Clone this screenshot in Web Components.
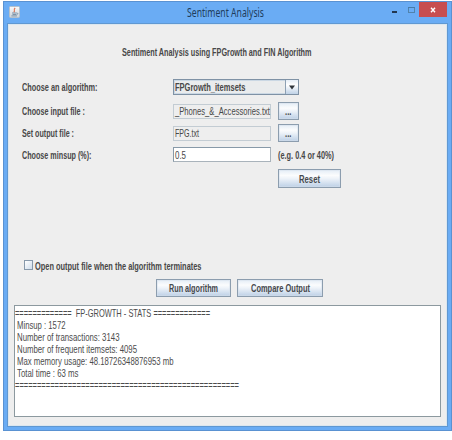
<!DOCTYPE html>
<html lang="en"><head><meta charset="utf-8"><title>Sentiment Analysis</title>
<style>html,body{margin:0;background:#fff}body{width:452px;height:440px;overflow:hidden}</style></head>
<body><analysis-app></analysis-app>
<script>
const define=(name,html,init)=>customElements.define(name,class extends HTMLElement{
  constructor(){super();this.attachShadow({mode:'open'})}
  connectedCallback(){this.shadowRoot.innerHTML=html;if(init)init.call(this,this.shadowRoot)}
});
// Text label condensed or stretched to a given width.
define('fit-text',`<style>:host{display:block;flex:none;height:14px}span{display:inline-block;line-height:14px;transform-origin:0 0;vertical-align:top;
font-weight:var(--weight,400);font-size:var(--size,10.4px);font-family:var(--face,"Liberation Sans",Arial,sans-serif);color:var(--ink,#484848);white-space:pre}</style>
<span></span>`,function(r){
  const w=+this.getAttribute('w'),t=r.querySelector('span');
  this.style.width=w+'px';t.textContent=this.getAttribute('text');
  t.style.transform='translateY(.6px) scaleX('+w/t.getBoundingClientRect().width+')';
});
define('swing-button',`<style>:host{display:flex;box-sizing:border-box;align-items:center;justify-content:center;border:1px solid #8c9dae;
background:linear-gradient(#e4edf6 0,#fbfcfd 32%,#eef3f9 50%,#bdd0e6 100%);box-shadow:inset 0 0 0 1px #d5e0eb80;--weight:700;--ink:#46494d}</style><slot></slot>`);
define('text-field',`<style>:host{display:flex;box-sizing:border-box;align-items:center;border:1px solid #c3ccd3;background:#eeeeee;padding-left:1px}
:host([editable]){background:#fff;border-color:#8799a8 #a9b3bb #a9b3bb #8799a8}</style><slot></slot>`);
define('combo-box',`<style>:host{display:flex;box-sizing:border-box;border:1px solid #7f92a5;background:#eaeced;box-shadow:inset 0 0 0 1px #cbd8e4;--weight:700}
.v{flex:1;padding-left:1px}.a{width:12px;border-left:1px solid #8da0b3;background:linear-gradient(#e5edf6,#fff 35%,#bfd2e7);display:flex;align-items:center;justify-content:center}svg{display:block}</style>
<div class="v"><slot></slot></div><div class="a"><svg width="8" height="5"><path d="M1 .5h6L4 4.5z" fill="#30353b"/></svg></div>`);
define('check-box',`<style>:host{display:flex;align-items:center;gap:2px;--weight:700}i{box-sizing:border-box;width:9px;height:10px;margin-top:-2px;border:1px solid #8799ab;background:linear-gradient(135deg,#fff,#cedceb)}</style><i></i><slot></slot>`);
define('title-bar',`<style>:host{display:grid;grid-template-columns:179px 1fr 59px;height:22px;box-sizing:border-box}
.i{padding:4px 0 0 1px}.t{--face:"Noto Sans","Open Sans",sans-serif;--size:12px;--ink:#203d5c;padding-top:3px}.c{display:flex}svg{display:block}</style>
<div class="i"><svg width="11" height="12"><defs><linearGradient id="g" x2="0" y2="1"><stop stop-color="#fafafa"/><stop offset="1" stop-color="#cbd3da"/></linearGradient></defs>
<rect x=".5" y=".5" width="10" height="11" rx="1" fill="url(#g)" stroke="#b5c1cc"/><path d="M6.2 2C3.7 4 6.8 4 4.8 6.3" stroke="#dc7352" stroke-width="1.1" fill="none"/><path d="M3 7h4.5M3.5 8.5h3.5M2.4 9.9h5.5M7.5 7c2-.2 1.4 1.6 0 1.6" stroke="#66829b" stroke-width=".8" fill="none"/></svg></div>
<div class="t"><fit-text w="77" text="Sentiment Analysis"></fit-text></div>
<div class="c"><svg width="59" height="16"><rect x="4" y="9" width="5" height="2" fill="#223750"/><rect x="20.5" y="5.5" width="6" height="5" fill="none" stroke="#5083ad"/><path d="M20 5.5h7" stroke="#477ba7"/><rect x="31" y="0" width="28" height="15" fill="#c74e50"/><path d="M43 5.7l4 4.6M47 5.7l-4 4.6" stroke="#fff" stroke-width="1.4"/></svg></div>`);
define('form-row',`<style>:host{display:grid;grid-template-columns:164px 98px 1fr;align-items:center;column-gap:0}
:host([wide]){grid-template-columns:164px 126px}.l{--weight:700;padding-left:12.5px}.e{padding-left:6.5px}:host([wide]) .e{display:none}</style>
<div class="l"><slot name="label"></slot></div><slot></slot><div class="e"><slot name="extra"></slot></div>`);
define('output-area',`<style>:host{display:flex;flex-direction:column;box-sizing:border-box;border:1px solid #8c999f;background:#fff;width:427px;height:112px;--ink:#4c4c4c}
fit-text{height:12px;padding-left:1.5px}fit-text.rule{padding-left:0}</style>
<fit-text class="rule" w="195" text="=============  FP-GROWTH - STATS ============="></fit-text>
<fit-text w="48.5" text="Minsup : 1572"></fit-text><fit-text w="102.5" text="Number of transactions: 3143"></fit-text>
<fit-text w="120" text="Number of frequent itemsets: 4095"></fit-text><fit-text w="156.5" text="Max memory usage: 48.18726348876953 mb"></fit-text>
<fit-text w="61.5" text="Total time : 63 ms"></fit-text><fit-text class="rule" w="224" text="==================================================="></fit-text>`);
define('analysis-app',`<style>
:host{display:block;padding:1px 0 0 3px}
.win{width:449px;height:430px;box-sizing:border-box;border:1px solid #5a92d2;background:#6aacf4;padding:0 4px 5px}
.body{box-sizing:border-box;height:402px;border:1px solid #dce7ef;outline:1px solid #6098d2;background:#eee;width:439px;display:grid;grid-template-rows:54px 16px 7px 18px 4px 18px 5px 15px 7px 19px 71px 12px 8px 18px 8px 112px}
.body>*{min-width:0}.head{--weight:700;padding:20px 0 0 112.5px}
combo-box{height:16px}text-field{height:15px}.dots{width:21px;height:18px}
.reset{padding-left:268.5px}.reset swing-button{width:63px;height:19px}
.check{padding-left:15px}.actions{display:flex;gap:6px;padding-left:147.4px}.actions swing-button{height:18px}.log{padding-left:5px}.hint{--weight:700}
</style>
<div class="win"><title-bar></title-bar><div class="body">
<div class="head"><fit-text w="189.5" text="Sentiment Analysis using FPGrowth and FIN Algorithm"></fit-text></div>
<form-row wide><fit-text slot="label" w="75.5" text="Choose an algorithm:"></fit-text><combo-box><fit-text w="70.5" text="FPGrowth_itemsets"></fit-text></combo-box></form-row><div></div>
<form-row><fit-text slot="label" w="63" text="Choose input file :"></fit-text><text-field><fit-text w="95" text="_Phones_&_Accessories.txt"></fit-text></text-field><swing-button class="dots" slot="extra"><fit-text w="6.5" text="..."></fit-text></swing-button></form-row><div></div>
<form-row><fit-text slot="label" w="52" text="Set output file :"></fit-text><text-field><fit-text w="24" text="FPG.txt"></fit-text></text-field><swing-button class="dots" slot="extra"><fit-text w="6.5" text="..."></fit-text></swing-button></form-row><div></div>
<form-row><fit-text slot="label" w="69.5" text="Choose minsup (%):"></fit-text><text-field editable><fit-text w="11" text="0.5"></fit-text></text-field><fit-text class="hint" slot="extra" w="56" text="(e.g. 0.4 or 40%)"></fit-text></form-row><div></div>
<div class="reset"><swing-button><fit-text w="21" text="Reset"></fit-text></swing-button></div><div></div>
<div class="check"><check-box><fit-text w="166.5" text="Open output file when the algorithm terminates"></fit-text></check-box></div><div></div>
<div class="actions"><swing-button style="width:75px"><fit-text w="49" text="Run algorithm"></fit-text></swing-button><swing-button style="width:86px"><fit-text w="59" text="Compare Output"></fit-text></swing-button></div><div></div>
<div class="log"><output-area></output-area></div>
</div></div>`);
</script></body></html>
